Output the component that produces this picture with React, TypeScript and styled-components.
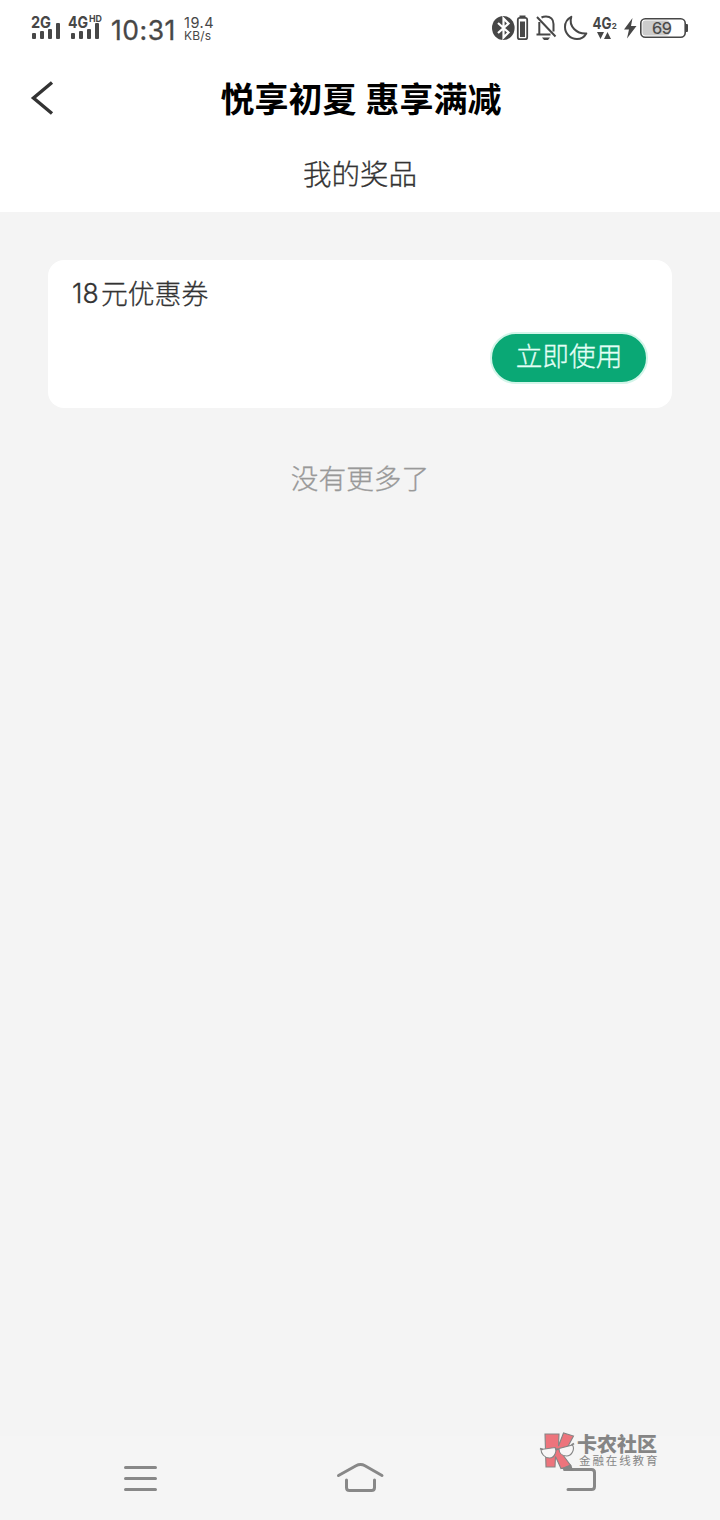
import React from "react";
import styled, { createGlobalStyle } from "styled-components";

const GlobalStyle = createGlobalStyle`
  * { box-sizing: border-box; }
  body { margin: 0; background: #f5f5f5; }
`;

const cjk = `"Noto Sans CJK SC", sans-serif`;
const ink = "#474747";

const Screen = styled.div`
  display: flex;
  flex-direction: column;
  width: 720px;
  height: 1520px;
  background: #f4f4f4;
  font-family: ${cjk};
  overflow: hidden;
`;

const StatusBar = styled.div`
  display: flex;
  justify-content: space-between;
  height: 56px;
  padding: 0 30px;
  background: #fff;
  color: ${ink};
  font-family: Inter, sans-serif;
`;

const StatusGroup = styled.div`
  display: flex;
  align-items: flex-start;
`;

const Clock = styled.span`
  width: 79px;
  padding: 14px 0 0 6px;
  font-size: 26.5px;
  line-height: 33px;
  letter-spacing: 0.5px;
  white-space: nowrap;
  -webkit-text-stroke: 0.3px ${ink};
`;

const Speed = styled.div`
  display: flex;
  flex-direction: column;
  padding-top: 16px;
  font-size: 14.5px;
  line-height: 13px;
  letter-spacing: 0.5px;
  white-space: nowrap;
`;

const SpeedUnit = styled.span`
  font-size: 12px;
  line-height: 13px;
  letter-spacing: 0.2px;
`;

const Header = styled.header`
  display: grid;
  grid-template-columns: 80px 1fr 80px;
  align-items: center;
  height: 84px;
  background: #fff;
`;

const BackButton = styled.button`
  display: flex;
  padding: 0 0 0 30px;
  border: 0;
  background: none;
`;

const Title = styled.h1`
  margin: 0;
  padding-left: 2px;
  color: #000;
  font-size: 34px;
  font-weight: 700;
  line-height: 50px;
  text-align: center;
  white-space: nowrap;
  word-spacing: 1.5px;
`;

const SubHeader = styled.div`
  height: 72px;
  padding-top: 12px;
  background: #fff;
  color: #333;
  font-size: 28.5px;
  font-weight: 300;
  line-height: 42px;
  text-align: center;
  -webkit-text-stroke: 0.3px #333;
`;

const Content = styled.main`
  display: flex;
  flex: 1;
  flex-direction: column;
  padding: 48px 48px 0;
`;

const Card = styled.section`
  display: flex;
  flex-direction: column;
  justify-content: space-between;
  height: 148px;
  padding: 14px 24px 25px 24px;
  border-radius: 16px;
  background: #fff;
`;

const PrizeName = styled.div`
  display: flex;
  color: #333;
  font-size: 26.8px;
  font-weight: 300;
  line-height: 38px;
  -webkit-text-stroke: 0.3px #333;
`;

const Amount = styled.span`
  width: 29px;
  font-family: Inter, sans-serif;
  font-size: 26.5px;
`;

const UseButton = styled.button`
  align-self: flex-end;
  width: 158px;
  height: 52px;
  margin-bottom: -1px;
  padding: 0 0 7px;
  border: 2px solid #d3f5e9;
  border-radius: 26px;
  background: #0aa875;
  color: #e4fff6;
  font-family: ${cjk};
  font-size: 26.7px;
  font-weight: 300;
  line-height: 40px;
  white-space: nowrap;
  -webkit-text-stroke: 0.3px #e4fff6;
`;

const EndNote = styled.p`
  margin: 49px 0 0;
  color: #999;
  font-size: 27.7px;
  font-weight: 300;
  line-height: 40px;
  text-align: center;
  -webkit-text-stroke: 0.3px #999;
`;

const NavBar = styled.nav`
  position: relative;
  display: flex;
  align-items: center;
  justify-content: space-between;
  height: 84px;
  padding: 0 121px;
  background: #f5f5f5;
`;

const Watermark = styled.div`
  position: absolute;
  top: -6px;
  left: 538px;
  display: flex;
  color: #858585;
`;

const WatermarkText = styled.div`
  display: flex;
  flex-direction: column;
  padding-left: 2px;
  white-space: nowrap;
`;

const BrandName = styled.span`
  font-size: 20px;
  font-weight: 900;
  line-height: 27px;
`;

const BrandLine = styled.span`
  padding-left: 2px;
  font-size: 11.5px;
  letter-spacing: 1.9px;
  line-height: 7px;
`;

const Signal = ({ label, hd }: { label: string; hd?: boolean }) => (
  <svg width={hd ? 38 : 37} height="44" viewBox={`0 0 ${hd ? 38 : 37} 44`} fill={ink}>
    <text x="1" y="27.5" fontSize="16" fontWeight="700" textLength="20" lengthAdjust="spacingAndGlyphs">
      {label}
    </text>
    {hd && (
      <text x="22" y="22" fontSize="9.5" fontWeight="700" textLength="13" lengthAdjust="spacingAndGlyphs">
        HD
      </text>
    )}
    <g transform={hd ? "translate(2 0)" : undefined}>
      <rect x="2" y="33" width="4" height="6" rx="1" />
      <rect x="10" y="31" width="4" height="8" rx="1" />
      <rect x="18" y="29" width="4" height="10" rx="1" />
      <rect x="26" y="23" width="4" height="16" rx="1" />
    </g>
  </svg>
);

const StatusIcons = () => (
  <svg width="200" height="56" viewBox="490 0 200 56" fill="none" stroke={ink} strokeWidth="2">
    <ellipse cx="503.3" cy="28" rx="11.3" ry="12" fill={ink} stroke="none" />
    <path d="M498 23l10.5 9.5-5 5v-19l5 5L498 33" stroke="#fff" strokeWidth="2.2" />
    <rect x="517.8" y="17.8" width="9.4" height="21.4" rx="2" strokeWidth="1.8" />
    <rect x="520" y="21.5" width="5" height="15.5" fill={ink} stroke="none" />
    <path d="M519.5 16.5h6" />
    <path d="M541.5 17.5c1.5-.8 3-1 4.500-1 4.500 0 7.500 3 7.500 7.500v7.500M539.300 22v12.500M536.500 34.500h14M537 17l18.500 19.500" />
    <path d="M542 37.500h8l-2 2.500h-4z" fill={ink} stroke="none" />
    <path d="M571.300 16.800c-4 2-6.300 6-6.300 10.200a12 12 0 0 0 12 12c4 0 7.500-2.200 9.300-5.500-9.500.5-18-7-15-16.700z" strokeLinejoin="round" />
    <g fill={ink} stroke="none">
      <text x="592.5" y="29" fontSize="16.5" fontWeight="700" textLength="19" lengthAdjust="spacingAndGlyphs">4G</text>
      <text x="611.8" y="29" fontSize="8" fontWeight="700">2</text>
      <path d="M597 32h7l-3.500 7zM604 39h7l-3.500-7z" />
      <path d="M632.500 18l-8.500 11.500h5l-2 9 9.500-12.500h-5.500z" />
    </g>
    <rect x="642.5" y="20.5" width="27" height="15" rx="3" fill="#ccc" stroke="none" />
    <rect x="640.8" y="18.8" width="44.4" height="18.4" rx="4.5" strokeWidth="1.6" />
    <path d="M686 24h1q1 0 1 1v6q0 1-1 1h-1z" fill={ink} stroke="none" />
    <text x="662" y="34" textAnchor="middle" fill={ink} stroke={ink} strokeWidth=".2" fontSize="16.5" textLength="20">69</text>
  </svg>
);

const BackIcon = () => (
  <svg width="26" height="36" viewBox="0 0 26 36" fill="none" stroke="#333" strokeWidth="3.4">
    <path d="M22 2.500L3.500 18l18.500 15.500" />
  </svg>
);

const MenuIcon = () => (
  <svg width="40" height="36" viewBox="0 0 40 36" stroke="#888" strokeWidth="3" strokeLinecap="round">
    <path d="M4.500 7.500h30M4.500 18.500h30M4.500 29.500h30" />
  </svg>
);

const HomeIcon = () => (
  <svg width="50" height="36" viewBox="0 0 50 36" fill="none" stroke="#888" strokeWidth="3" strokeLinecap="round">
    <path d="M3.500 15.500L21 5.700q4.500-2.400 9 0l17 9.800M11.500 20v7.500q0 3 3 3h22q3 0 3-3V20" />
  </svg>
);

const ReturnIcon = () => (
  <svg width="40" height="36" viewBox="0 0 40 36" fill="none" stroke="#888" strokeWidth="3" strokeLinecap="round">
    <path d="M5.500 9.500h27q3 0 3 3v14q0 3-3 3H9" />
  </svg>
);

const BrandLogo = () => (
  <svg width="37" height="42" viewBox="0 0 37 42" stroke="#858585" strokeWidth="1.1">
    <path d="M7 4h14l-.5 12L25.500 3l10 3-7.500 14-3 5 8 11-10 2.500-5.500-12-.5 10.500H8z" fill="#ed747c" />
    <path d="M3 19.500l14-2c2 2 .5 10.500-5.500 10.500-5 0-8.500-4.500-8.500-8.500z" fill="#f8f6f6" />
    <path d="M21 18.500l13.500-3.500c2.500 4-.5 11-6 11-5 0-7.500-3.500-7.500-7.500z" fill="#f8f6f6" />
    <path d="M2 18.500l3 1M17.500 20q1.500-1.500 3.500-.5M33.500 15l2.500-1.500" fill="none" strokeWidth="1.8" />
    <path d="M24.500 38.500l8-3.500 2 5z" fill="#858585" />
  </svg>
);

export default function App() {
  return (
    <Screen>
      <GlobalStyle />
      <StatusBar>
        <StatusGroup>
          <Signal label="2G" />
          <Signal label="4G" hd />
          <Clock>10:31</Clock>
          <Speed>
            19.4
            <SpeedUnit>KB/s</SpeedUnit>
          </Speed>
        </StatusGroup>
        <StatusIcons />
      </StatusBar>
      <Header>
        <BackButton aria-label="返回">
          <BackIcon />
        </BackButton>
        <Title>悦享初夏 惠享满减</Title>
      </Header>
      <SubHeader>我的奖品</SubHeader>
      <Content>
        <Card>
          <PrizeName>
            <Amount>18</Amount>元优惠券
          </PrizeName>
          <UseButton>立即使用</UseButton>
        </Card>
        <EndNote>没有更多了</EndNote>
      </Content>
      <NavBar>
        <MenuIcon />
        <HomeIcon />
        <ReturnIcon />
        <Watermark>
          <BrandLogo />
          <WatermarkText>
            <BrandName>卡农社区</BrandName>
            <BrandLine>金融在线教育</BrandLine>
          </WatermarkText>
        </Watermark>
      </NavBar>
    </Screen>
  );
}
